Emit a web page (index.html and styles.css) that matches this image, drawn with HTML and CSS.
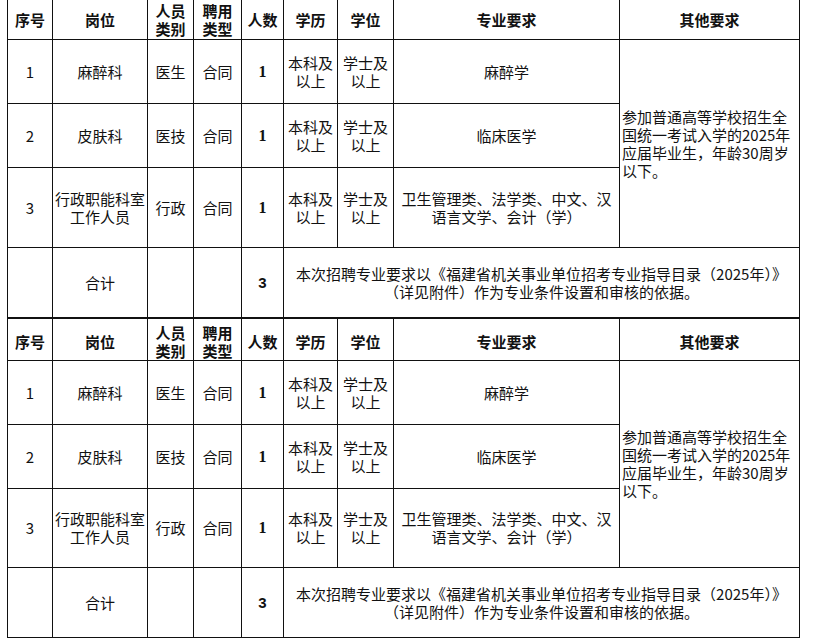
FILE: index.html
```html
<!DOCTYPE html>
<html lang="zh-CN">
<head>
<meta charset="utf-8">
<title>招聘岗位表</title>
<link rel="stylesheet" href="styles.css">
</head>
<body>
<div class="page">
  <table class="grid">
    <colgroup>
      <col class="c-no"><col class="c-post"><col class="c-kind"><col class="c-type"><col class="c-count"><col class="c-edu"><col class="c-deg"><col class="c-major"><col class="c-other">
    </colgroup>
    <tr class="head">
      <th>序号</th><th>岗位</th><th>人员<br>类别</th><th>聘用<br>类型</th><th>人数</th><th>学历</th><th>学位</th><th>专业要求</th><th>其他要求</th>
    </tr>
    <tr class="row">
      <td>1</td><td>麻醉科</td><td>医生</td><td>合同</td><td class="num">1</td><td>本科及<br>以上</td><td>学士及<br>以上</td><td>麻醉学</td>
      <td rowspan="3" class="other">参加普通高等学校招生全<br>国统一考试入学的2025年<br>应届毕业生，年龄30周岁<br>以下。</td>
    </tr>
    <tr class="row">
      <td>2</td><td>皮肤科</td><td>医技</td><td>合同</td><td class="num">1</td><td>本科及<br>以上</td><td>学士及<br>以上</td><td>临床医学</td>
    </tr>
    <tr class="row-tall">
      <td>3</td><td>行政职能科室<br>工作人员</td><td>行政</td><td>合同</td><td class="num">1</td><td>本科及<br>以上</td><td>学士及<br>以上</td><td>卫生管理类、法学类、中文、汉<br>语言文学、会计（学）</td>
    </tr>
    <tr class="total">
      <td></td><td>合计</td><td></td><td></td><td class="num sum">3</td>
      <td colspan="4">本次招聘专业要求以《福建省机关事业单位招考专业指导目录（2025年）》<br>（详见附件）作为专业条件设置和审核的依据。</td>
    </tr>
  </table>
  <table class="grid second">
    <colgroup>
      <col class="c-no"><col class="c-post"><col class="c-kind"><col class="c-type"><col class="c-count"><col class="c-edu"><col class="c-deg"><col class="c-major"><col class="c-other">
    </colgroup>
    <tr class="head">
      <th>序号</th><th>岗位</th><th>人员<br>类别</th><th>聘用<br>类型</th><th>人数</th><th>学历</th><th>学位</th><th>专业要求</th><th>其他要求</th>
    </tr>
    <tr class="row">
      <td>1</td><td>麻醉科</td><td>医生</td><td>合同</td><td class="num">1</td><td>本科及<br>以上</td><td>学士及<br>以上</td><td>麻醉学</td>
      <td rowspan="3" class="other">参加普通高等学校招生全<br>国统一考试入学的2025年<br>应届毕业生，年龄30周岁<br>以下。</td>
    </tr>
    <tr class="row">
      <td>2</td><td>皮肤科</td><td>医技</td><td>合同</td><td class="num">1</td><td>本科及<br>以上</td><td>学士及<br>以上</td><td>临床医学</td>
    </tr>
    <tr class="row-tall">
      <td>3</td><td>行政职能科室<br>工作人员</td><td>行政</td><td>合同</td><td class="num">1</td><td>本科及<br>以上</td><td>学士及<br>以上</td><td>卫生管理类、法学类、中文、汉<br>语言文学、会计（学）</td>
    </tr>
    <tr class="total">
      <td></td><td>合计</td><td></td><td></td><td class="num sum">3</td>
      <td colspan="4">本次招聘专业要求以《福建省机关事业单位招考专业指导目录（2025年）》<br>（详见附件）作为专业条件设置和审核的依据。</td>
    </tr>
  </table>
</div>
</body>
</html>
```
FILE: styles.css
```css
html, body {
  margin: 0;
  padding: 0;
  background: #ffffff;
}

.page {
  padding-left: 7px;
  margin-top: -5px;
  font-family: "Noto Sans CJK SC", "Noto Sans", sans-serif;
  color: #111111;
}

.grid {
  border-collapse: collapse;
  table-layout: fixed;
  width: 793px;
}

.grid th,
.grid td {
  border: 1px solid #111111;
  padding: 0;
  text-align: center;
  vertical-align: middle;
  font-size: 15px;
  line-height: 18px;
  font-weight: 400;
}

.grid th {
  font-weight: 700;
  padding-top: 4px;
}

.c-no { width: 45px; }
.c-post { width: 95px; }
.c-kind { width: 46px; }
.c-type { width: 48px; }
.c-count { width: 42px; }
.c-edu { width: 54px; }
.c-deg { width: 56px; }
.c-major { width: 226px; }
.c-other { width: 180px; }

.head { height: 44px; }
.row { height: 64px; }
.row-tall { height: 80px; }
.total { height: 70px; }

.second .head { height: 42px; }
.second .row-tall { height: 79px; }

.grid td.num {
  font-family: "Liberation Serif", serif;
  font-weight: 700;
  font-size: 16px;
}

.grid td.sum {
  font-family: "Liberation Sans", sans-serif;
  font-size: 15px;
}

.grid td.other {
  text-align: left;
  padding-left: 2px;
}
```
